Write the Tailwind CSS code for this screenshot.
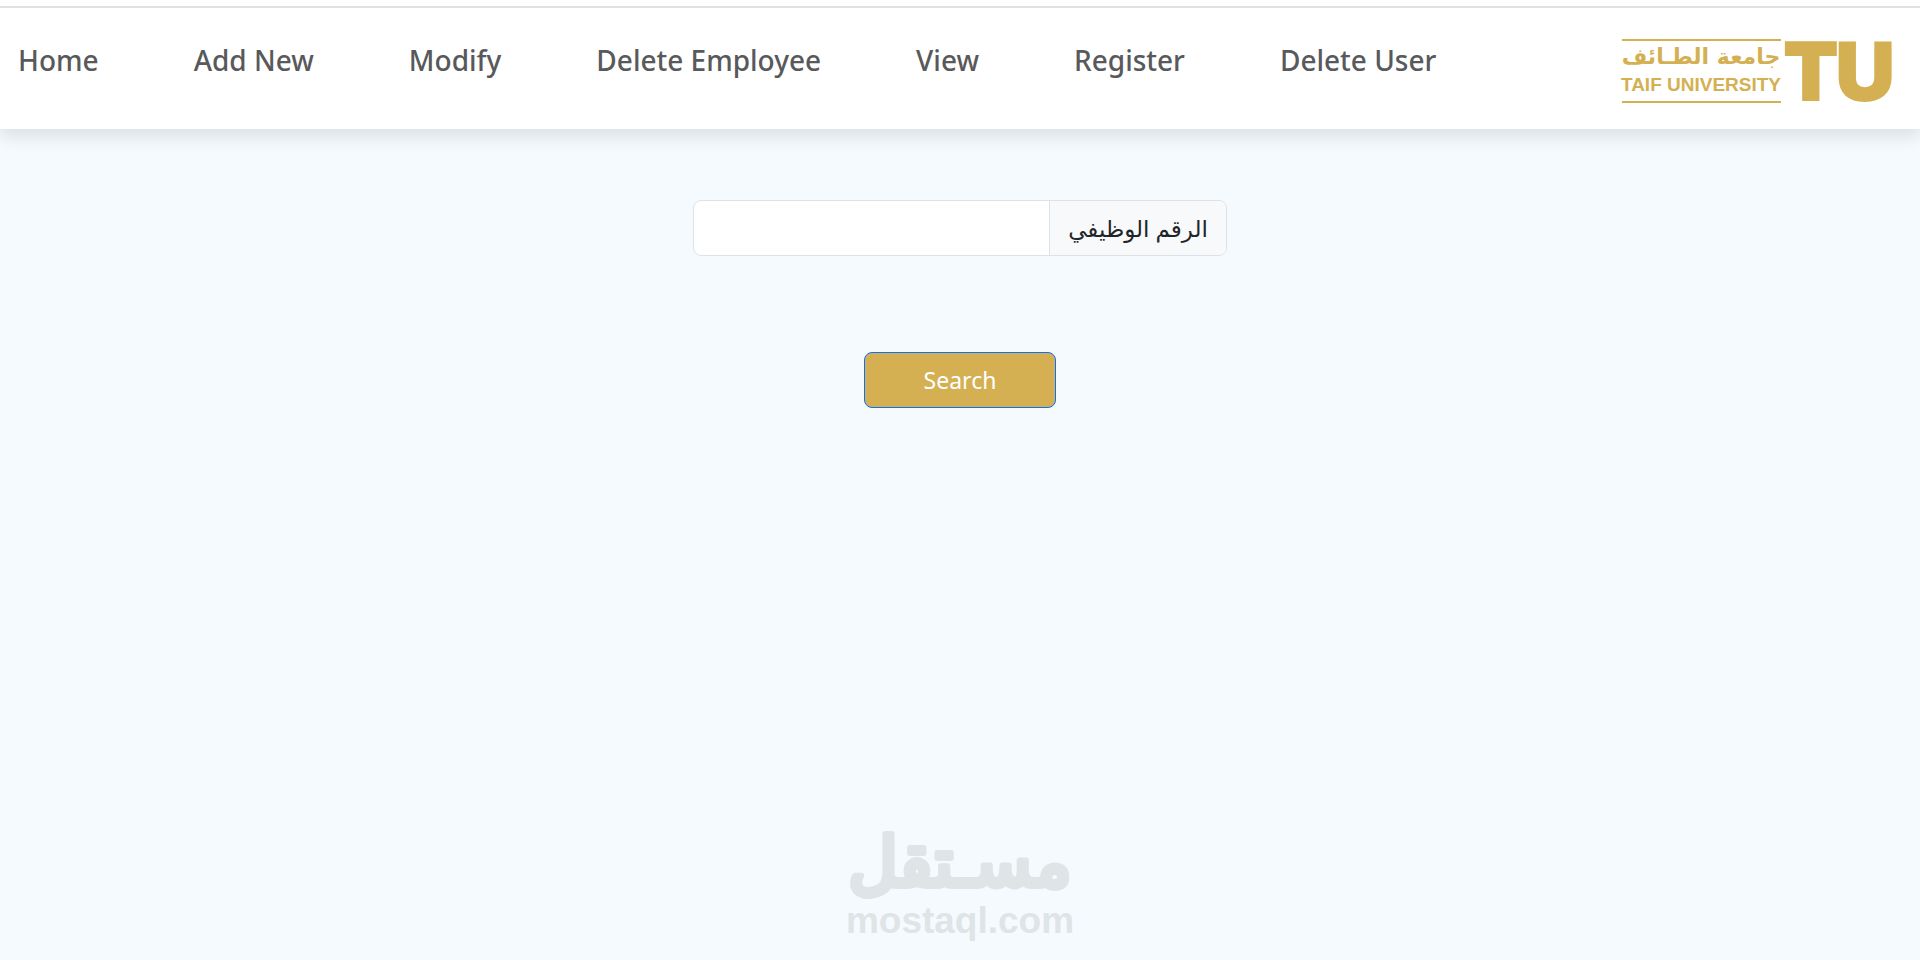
<!DOCTYPE html>
<html lang="en">
<head>
    <meta charset="UTF-8">
    <meta name="viewport" content="width=device-width, initial-scale=1.0">
    <title>Taif University</title>
    <script src="https://cdn.jsdelivr.net/npm/@tailwindcss/browser@4"></script>
</head>
<body class="flex min-h-screen flex-col bg-[#f5faff] font-['Noto_Sans','DejaVu_Sans',sans-serif] text-[23px] text-[#212529]">

<!-- Navbar -->
<header class="bg-white pt-1.5 shadow-[0_8px_16px_rgba(0,0,0,0.1)]">
    <div class="flex items-start justify-between border-t-2 border-[#dee2e6] pr-7 pb-6 pl-[18px]">
        <nav class="pt-8">
            <ul class="flex gap-[95px] text-[28px] leading-10 font-medium text-[#58595b]">
                <li><a href="#">Home</a></li>
                <li><a href="#">Add New</a></li>
                <li><a href="#">Modify</a></li>
                <li><a href="#">Delete Employee</a></li>
                <li><a href="#">View</a></li>
                <li><a href="#">Register</a></li>
                <li><a href="#">Delete User</a></li>
            </ul>
        </nav>
        <a href="#" class="pt-7">
            <svg class="h-[69px] w-[272px] overflow-visible" viewBox="0 0 272 69" fill="#d4b052" role="img" aria-label="Taif University">
                <rect x="2" y="3" width="159" height="2"/>
                <rect x="2" y="65" width="159" height="2"/>
                <text x="81" y="28" font-family="DejaVu Sans" font-weight="700" font-size="22" text-anchor="middle">جامعة الطـائف</text>
                <text x="81" y="55" font-family="Liberation Sans" font-weight="700" font-size="19" text-anchor="middle">TAIF UNIVERSITY</text>
                <g font-family="Liberation Sans" font-weight="700" font-size="78" stroke="#d4b052" stroke-width="6">
                    <text x="167" y="62">T</text>
                    <text x="217" y="62">U</text>
                </g>
            </svg>
        </a>
    </div>
</header>

<!-- Search form -->
<main class="flex-1">
    <form class="flex flex-col items-center gap-24 pt-[71px]">
        <div class="flex h-14 w-[534px] max-w-full overflow-hidden rounded-lg border border-[#dee2e6] bg-white">
            <input id="employeeId" type="text" class="min-w-0 flex-1 px-4 outline-none">
            <label for="employeeId" dir="rtl" class="flex w-[177px] items-center justify-center border-l border-[#dee2e6] bg-[#f8f9fa]">الرقم الوظيفي</label>
        </div>
        <button type="button" class="h-14 w-48 rounded-lg border border-[#0d6efd] bg-[#d4b052] text-white">Search</button>
    </form>
</main>

<!-- Watermark -->
<footer class="flex justify-center pb-4">
    <svg class="h-[112px] w-[234px] overflow-visible" viewBox="0 0 234 112" fill="#dfe4e6" role="img" aria-label="mostaql.com">
        <text x="117" y="54" font-family="DejaVu Sans" font-size="68" text-anchor="middle" stroke="#dfe4e6" stroke-width="6" stroke-linejoin="round">مسـتقل</text>
        <text x="117" y="101" font-family="Liberation Sans" font-weight="700" font-size="37" text-anchor="middle">mostaql.com</text>
    </svg>
</footer>

</body>
</html>
